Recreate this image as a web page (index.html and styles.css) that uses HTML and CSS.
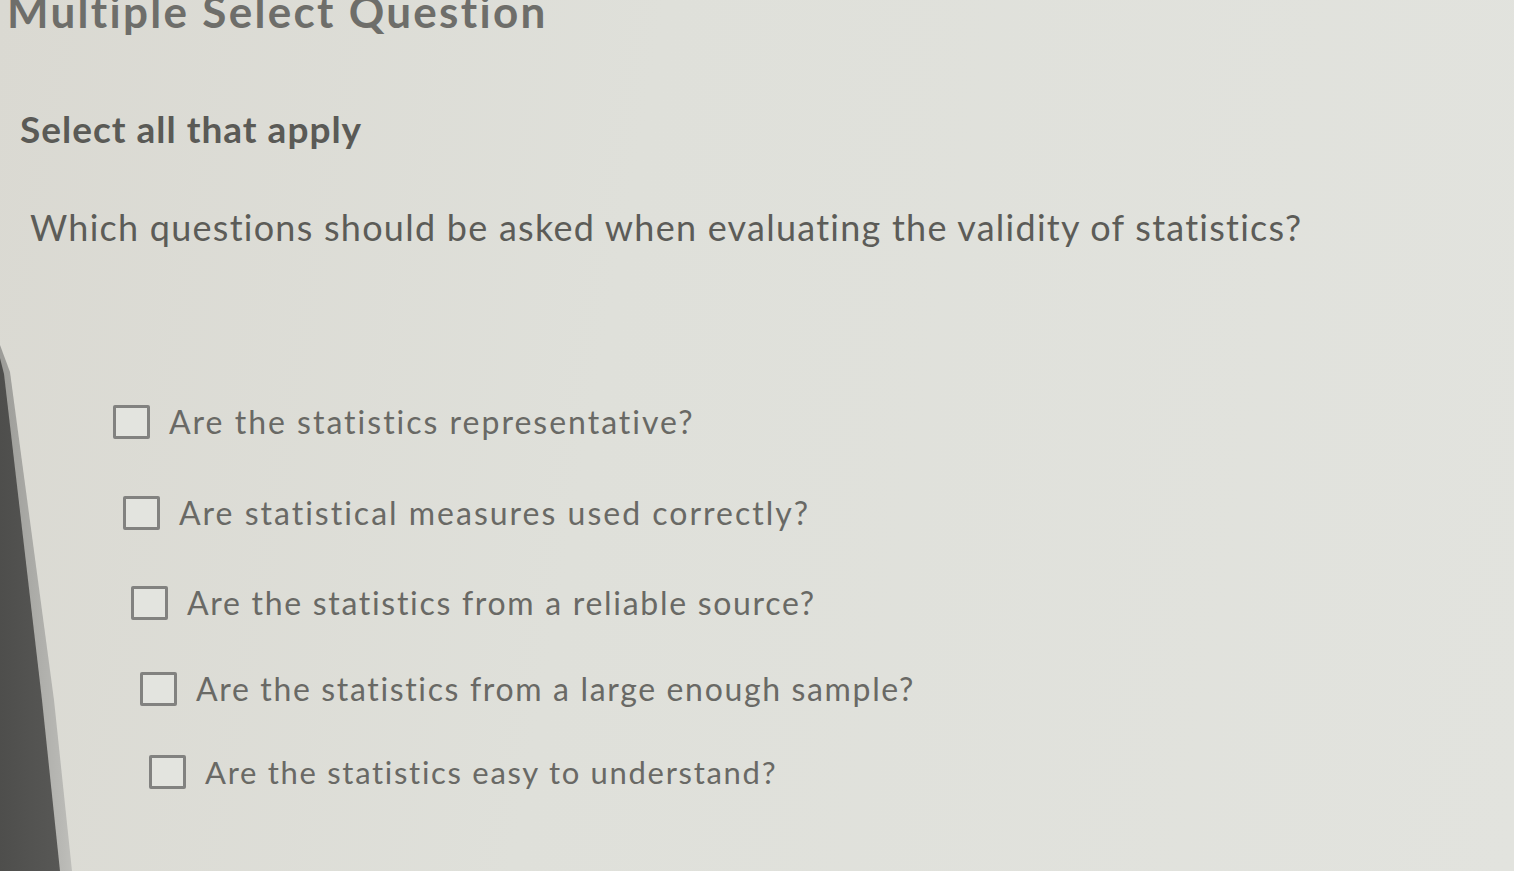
FILE: index.html
```html
<!DOCTYPE html>
<html lang="en">
<head>
<meta charset="utf-8">
<title>Multiple Select Question</title>
<link rel="stylesheet" href="styles.css">
</head>
<body>
<div class="bezel-edge"></div>
<div class="bezel"></div>
<main class="page">
  <h1 class="title">Multiple Select Question</h1>
  <p class="instruction">Select all that apply</p>
  <p class="question">Which questions should be asked when evaluating the validity of statistics?</p>
  <ul class="options">
    <li class="option"><span class="box"></span><span class="label">Are the statistics representative?</span></li>
    <li class="option"><span class="box"></span><span class="label">Are statistical measures used correctly?</span></li>
    <li class="option"><span class="box"></span><span class="label">Are the statistics from a reliable source?</span></li>
    <li class="option"><span class="box"></span><span class="label">Are the statistics from a large enough sample?</span></li>
    <li class="option"><span class="box"></span><span class="label">Are the statistics easy to understand?</span></li>
  </ul>
</main>
</body>
</html>
```

FILE: styles.css
```css
html, body {
  margin: 0;
  padding: 0;
  height: 100%;
  overflow: hidden;
}
body {
  background: linear-gradient(100deg, #dad9d2 0%, #dfe0da 40%, #e2e3de 100%);
  font-family: Lato, "Liberation Sans", sans-serif;
  color: #5f5f5b;
  position: relative;
}
.bezel-edge {
  position: absolute;
  left: 0;
  top: 0;
  width: 90px;
  height: 871px;
  background: linear-gradient(90deg, #9c9c98 0%, #b9b9b5 70%, #c9c9c4 100%);
  clip-path: polygon(0 345px, 10px 372px, 54px 700px, 72px 871px, 0 871px);
}
.bezel {
  position: absolute;
  left: 0;
  top: 0;
  width: 80px;
  height: 871px;
  background: linear-gradient(90deg, #4e4e4c 0%, #5b5b59 100%);
  clip-path: polygon(0 358px, 4px 374px, 42px 700px, 60px 871px, 0 871px);
}
.page {
  display: flex;
  flex-direction: column;
  padding: 0 0 0 8px;
}
.title {
  margin: -14px 0 0 -1px;
  font-size: 44px;
  font-weight: 700;
  color: #6e6e6a;
  line-height: 50px;
  letter-spacing: 2.3px;
}
.instruction {
  margin: 71px 0 0 12px;
  font-size: 37px;
  font-weight: 700;
  color: #5a5a56;
  line-height: 44px;
  letter-spacing: 1px;
}
.question {
  margin: 54px 0 0 22px;
  font-size: 36px;
  font-weight: 400;
  color: #5c5c58;
  line-height: 44px;
  letter-spacing: 1.25px;
}
.options {
  list-style: none;
  margin: 156px 0 0 0;
  padding: 0;
  display: flex;
  flex-direction: column;
}
.option {
  display: flex;
  align-items: center;
  gap: 19px;
  height: 34px;
  font-size: 32px;
  color: #696965;
  letter-spacing: 2px;
  padding-left: 105px;
}
.option:nth-child(2) { padding-left: 115px; margin-top: 57px; }
.option:nth-child(3) { padding-left: 123px; margin-top: 56px; letter-spacing: 1.7px; }
.option:nth-child(4) { padding-left: 132px; margin-top: 52px; letter-spacing: 1.65px; }
.option:nth-child(5) { padding-left: 141px; margin-top: 49px; letter-spacing: 1.7px; font-size: 31px; }
.box {
  width: 31px;
  height: 28px;
  border: 3px solid #828280;
  border-radius: 2px;
  background: #e3e4df;
  flex: none;
}
.label {
  line-height: 34px;
}
```
